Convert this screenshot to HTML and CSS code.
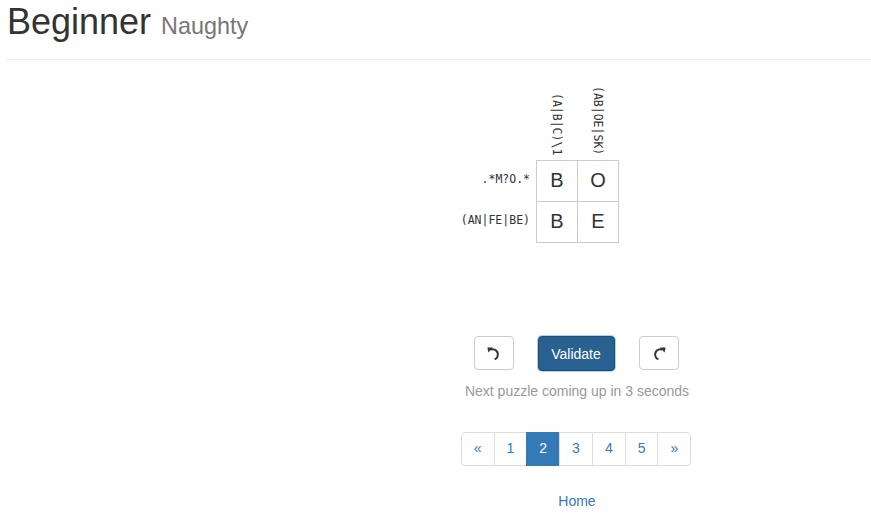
FILE: index.html
```html
<!DOCTYPE html>
<html>
<head>
<meta charset="utf-8">
<link rel="stylesheet" href="styles.css">
</head>
<body>
<div class="page">
  <h1 class="title">Beginner <small class="subtitle">Naughty</small></h1>
  <div class="rule"></div>
  <div class="play">
    <div class="puzzle">
      <div class="corner"></div>
      <div class="col-label"><span>(A|B|C)\1</span></div>
      <div class="col-label"><span>(AB|OE|SK)</span></div>
      <div class="filler"></div>

      <div class="row-label">.*M?O.*</div>
      <div class="cell">B</div>
      <div class="cell">O</div>
      <div class="filler"></div>

      <div class="row-label">(AN|FE|BE)</div>
      <div class="cell">B</div>
      <div class="cell">E</div>
      <div class="filler"></div>
    </div>

    <div class="controls">
      <button class="btn btn-icon" aria-label="Undo">
        <svg width="16" height="16" viewBox="0 0 16 16"><path d="M4.6 4.6 A5.2 5.2 0 1 1 8.6 14.4" fill="none" stroke="#333" stroke-width="2"/><path d="M1.4 2.4 L7 2.6 L2.4 7.6 Z" fill="#333"/></svg>
      </button>
      <button class="btn btn-primary">Validate</button>
      <button class="btn btn-icon" aria-label="Redo">
        <svg width="16" height="16" viewBox="0 0 16 16"><path d="M11.4 4.6 A5.2 5.2 0 1 0 7.4 14.4" fill="none" stroke="#333" stroke-width="2"/><path d="M14.6 2.4 L9 2.6 L13.6 7.6 Z" fill="#333"/></svg>
      </button>
    </div>
    <p class="notice">Next puzzle coming up in 3 seconds</p>

    <ul class="pagination">
      <li><a href="#">«</a></li>
      <li><a href="#">1</a></li>
      <li class="active"><a href="#">2</a></li>
      <li><a href="#">3</a></li>
      <li><a href="#">4</a></li>
      <li><a href="#">5</a></li>
      <li><a href="#">»</a></li>
    </ul>

    <a class="home" href="#">Home</a>
  </div>
</div>
</body>
</html>
```

FILE: styles.css
```css
html, body {
  margin: 0;
  padding: 0;
  background: #fff;
}
body {
  font-family: "Liberation Sans", Arial, sans-serif;
  font-size: 14px;
  line-height: 1.42857;
  color: #333;
}
.page {
  padding: 0 0 0 7px;
}
.title {
  margin: 2px 0 0;
  font-size: 36px;
  font-weight: 400;
  line-height: 1.1;
  color: #333;
}
.subtitle {
  font-size: 65%;
  color: #777;
  font-weight: 400;
}
.rule {
  margin-top: 17px;
  border-top: 1px solid #eee;
}
.play {
  margin-left: 275px;
  width: 590px;
  display: flex;
  flex-direction: column;
  align-items: center;
}
.puzzle {
  display: grid;
  width: 100%;
  grid-template-columns: 1fr 41px 41px 1fr;
  grid-template-rows: 100px 41px 41px;
  margin-bottom: 94px;
}
.col-label {
  display: flex;
  justify-content: center;
  align-items: flex-end;
  padding-bottom: 4px;
}
.col-label span,
.row-label {
  font-family: "DejaVu Sans Mono", monospace;
  font-size: 11.5px;
  color: #333;
  line-height: 1;
}
.col-label span {
  writing-mode: vertical-rl;
}
.row-label {
  display: flex;
  align-items: center;
  justify-content: flex-end;
  padding-right: 6px;
}
.cell {
  display: flex;
  align-items: center;
  justify-content: center;
  border: 1px solid #ccc;
  margin: 0 -1px -1px 0;
  font-size: 20px;
  color: #333;
}
.controls {
  display: flex;
  gap: 24px;
  align-items: center;
  margin-left: -2px;
}
.btn {
  font-family: "Liberation Sans", Arial, sans-serif;
  font-size: 14px;
  line-height: 1.42857;
  border-radius: 4px;
  border: 1px solid #ccc;
  background: #fff;
  color: #333;
  padding: 6px 12px;
  height: 34px;
  display: flex;
  align-items: center;
  justify-content: center;
}
.btn-icon {
  width: 40px;
  padding: 0;
}
.btn-primary {
  background: #286090;
  border-color: #204d74;
  color: #fff;
  height: 35px;
  width: 77px;
  padding-top: 8px;
  padding-bottom: 5px;
  box-shadow: 0 0 0 1px rgba(102, 175, 233, 0.55);
}
.notice {
  margin: 11px 0 0;
  color: #999;
  font-size: 14px;
}
.pagination {
  list-style: none;
  display: flex;
  margin: 30px 0 0 -2px;
  padding: 0;
}
.pagination li a {
  display: block;
  padding: 6px 12px;
  text-align: center;
  border: 1px solid #ddd;
  margin-left: -1px;
  color: #337ab7;
  text-decoration: none;
  background: #fff;
  line-height: 1.42857;
}
.pagination li:first-child a {
  margin-left: 0;
  border-radius: 4px 0 0 4px;
}
.pagination li:last-child a {
  border-radius: 0 4px 4px 0;
}
.pagination li.active a {
  background: #337ab7;
  border-color: #337ab7;
  color: #fff;
}
.home {
  margin-top: 26px;
  color: #337ab7;
  text-decoration: none;
}
```
